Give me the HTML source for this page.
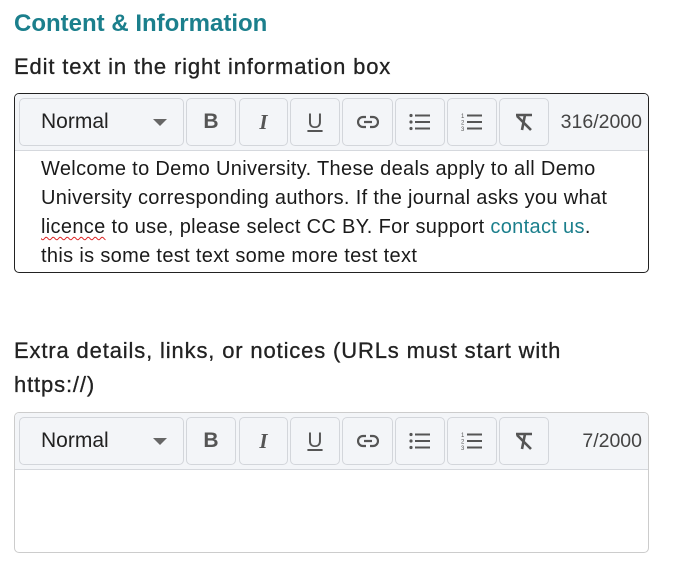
<!DOCTYPE html><html><head><style>
body{margin:0;width:678px;height:574px;background:#fff;font-family:"Liberation Sans",sans-serif;color:#1d1d1f;position:relative;overflow:hidden}
.a{position:absolute}
h1{position:absolute;left:14px;top:10px;margin:0;font-size:24px;font-weight:bold;color:#1b7f8c}
.lbl{position:absolute;left:14px;font-size:22px;letter-spacing:0.85px;color:#222;line-height:34px;-webkit-text-stroke:0.3px #222}
.box{position:absolute;left:14px;width:633px;border:1px solid #222;border-radius:5px;overflow:hidden}
.box.b2{border-color:#ccc}
.tb{height:56px;background:#f3f5f8;border-bottom:1px solid #d5d8dd;position:relative}
.btn{position:absolute;top:4px;height:46px;border:1px solid #d3d6db;border-radius:5px;background:#f3f5f8;display:flex;align-items:center;justify-content:center;color:#555;font-size:21px}
.cnt{position:absolute;right:6px;top:17px;font-size:19.5px;color:#444}
.txt{padding:4px 0 0 26px;font-size:20px;letter-spacing:0.33px;line-height:29px;color:#1a1a1a;white-space:nowrap}
.txt a{color:#1b7f8c;text-decoration:none}
.sq{text-decoration:underline wavy #d22;text-decoration-thickness:1px;text-underline-offset:3px}
</style></head><body>
<h1>Content &amp; Information</h1>
<div class="lbl" style="top:50px">Edit text in the right information box</div>
<div class="box" style="top:93px;height:178px">
 <div class="tb">
  <div class="btn" style="left:4px;width:163px;justify-content:flex-start;color:#222"><span style="margin-left:21px">Normal</span><span class="a" style="left:133px;top:20px;border-left:7px solid transparent;border-right:7px solid transparent;border-top:7px solid #666"></span></div>
  <div class="btn" style="left:171px;width:48px;font-weight:bold">B</div>
  <div class="btn" style="left:224px;width:47px;font-style:italic;font-weight:bold;font-family:'Liberation Serif',serif">I</div>
  <div class="btn" style="left:275px;width:48px;text-decoration:underline">U</div>
  <div class="btn" style="left:327px;width:49px"><svg width="22" height="14" viewBox="0 0 22 14" fill="none" stroke="#555" stroke-width="2.2"><path d="M9 2H6a5 5 0 0 0 0 10h3M13 2h3a5 5 0 0 1 0 10h-3M7 7h8"/></svg></div>
  <div class="btn" style="left:380px;width:48px"><svg width="22" height="18" viewBox="0 0 22 18" fill="#555"><circle cx="2" cy="2.5" r="1.6"/><circle cx="2" cy="9" r="1.6"/><circle cx="2" cy="15.5" r="1.6"/><rect x="6" y="1.5" width="15" height="2"/><rect x="6" y="8" width="15" height="2"/><rect x="6" y="14.5" width="15" height="2"/></svg></div>
  <div class="btn" style="left:432px;width:48px"><svg width="22" height="20" viewBox="0 0 22 20" fill="#555"><text x="0" y="6" font-size="6" font-family="Liberation Sans">1</text><text x="0" y="12.5" font-size="6" font-family="Liberation Sans">2</text><text x="0" y="19" font-size="6" font-family="Liberation Sans">3</text><rect x="6" y="2.5" width="15" height="2"/><rect x="6" y="9" width="15" height="2"/><rect x="6" y="15.5" width="15" height="2"/></svg></div>
  <div class="btn" style="left:484px;width:48px"><svg width="22" height="20" viewBox="0 0 22 20" fill="none" stroke="#555" stroke-width="2.6"><path d="M3 3h16M12 3L9 18M4 4l14 14"/></svg></div>
  <div class="cnt">316/2000</div>
 </div>
 <div class="txt">Welcome to Demo University. These deals apply to all Demo<br>University corresponding authors. If the journal asks you what<br><span class="sq">licence</span> to use, please select CC BY. For support <a>contact us</a>.<br>this is some test text some more test text</div>
</div>
<div class="lbl" style="top:334px">Extra details, links, or notices (URLs must start with<br>https://)</div>
<div class="box b2" style="top:412px;height:139px">
 <div class="tb">
  <div class="btn" style="left:4px;width:163px;justify-content:flex-start;color:#222"><span style="margin-left:21px">Normal</span><span class="a" style="left:133px;top:20px;border-left:7px solid transparent;border-right:7px solid transparent;border-top:7px solid #666"></span></div>
  <div class="btn" style="left:171px;width:48px;font-weight:bold">B</div>
  <div class="btn" style="left:224px;width:47px;font-style:italic;font-weight:bold;font-family:'Liberation Serif',serif">I</div>
  <div class="btn" style="left:275px;width:48px;text-decoration:underline">U</div>
  <div class="btn" style="left:327px;width:49px"><svg width="22" height="14" viewBox="0 0 22 14" fill="none" stroke="#555" stroke-width="2.2"><path d="M9 2H6a5 5 0 0 0 0 10h3M13 2h3a5 5 0 0 1 0 10h-3M7 7h8"/></svg></div>
  <div class="btn" style="left:380px;width:48px"><svg width="22" height="18" viewBox="0 0 22 18" fill="#555"><circle cx="2" cy="2.5" r="1.6"/><circle cx="2" cy="9" r="1.6"/><circle cx="2" cy="15.5" r="1.6"/><rect x="6" y="1.5" width="15" height="2"/><rect x="6" y="8" width="15" height="2"/><rect x="6" y="14.5" width="15" height="2"/></svg></div>
  <div class="btn" style="left:432px;width:48px"><svg width="22" height="20" viewBox="0 0 22 20" fill="#555"><text x="0" y="6" font-size="6" font-family="Liberation Sans">1</text><text x="0" y="12.5" font-size="6" font-family="Liberation Sans">2</text><text x="0" y="19" font-size="6" font-family="Liberation Sans">3</text><rect x="6" y="2.5" width="15" height="2"/><rect x="6" y="9" width="15" height="2"/><rect x="6" y="15.5" width="15" height="2"/></svg></div>
  <div class="btn" style="left:484px;width:48px"><svg width="22" height="20" viewBox="0 0 22 20" fill="none" stroke="#555" stroke-width="2.6"><path d="M3 3h16M12 3L9 18M4 4l14 14"/></svg></div>
  <div class="cnt">7/2000</div>
 </div>
</div>
</body></html>
